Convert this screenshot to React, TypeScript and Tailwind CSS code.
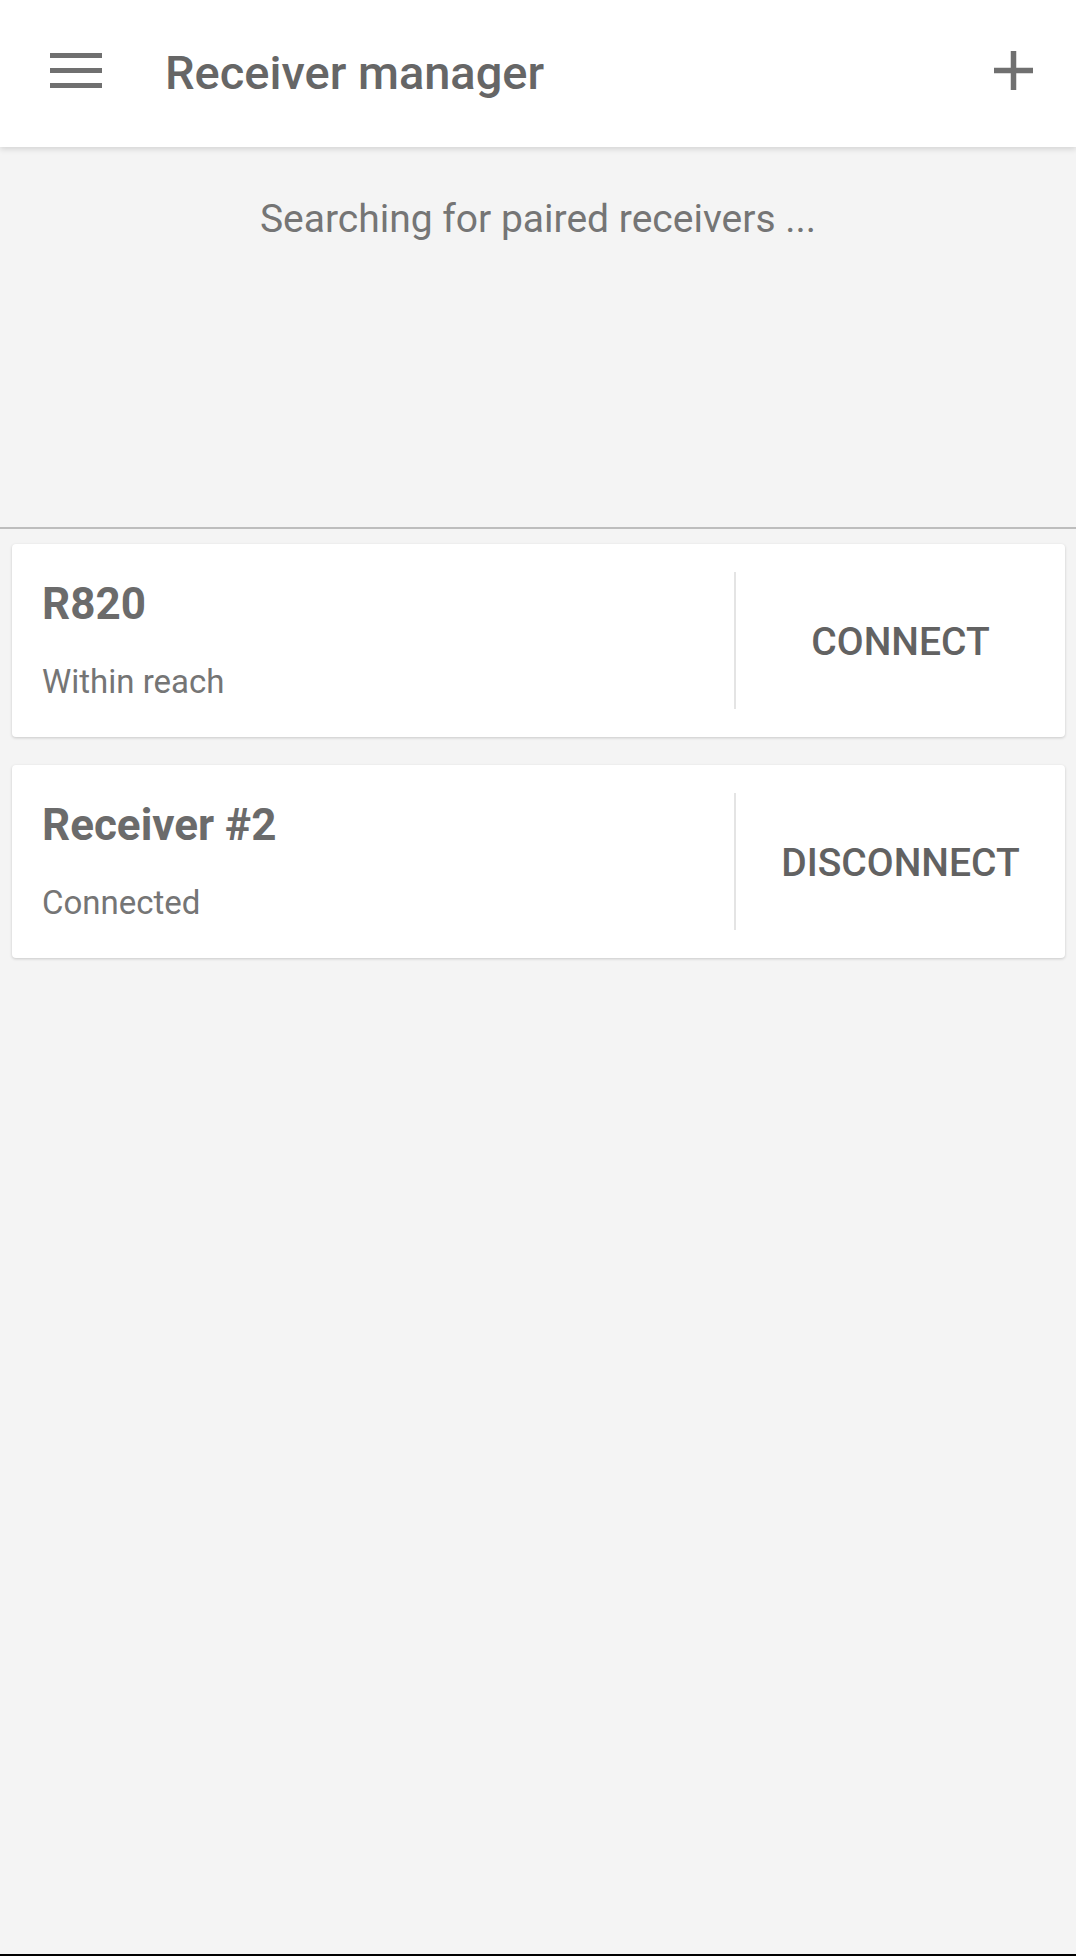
const receivers = [
  { name: "R820", status: "Within reach", action: "CONNECT" },
  { name: "Receiver #2", status: "Connected", action: "DISCONNECT" },
];

const MenuIcon = () => (
  <svg width="52" height="35" viewBox="0 0 52 35" className="fill-[#707070]">
    <rect x="0" y="0" width="52" height="5" />
    <rect x="0" y="15" width="52" height="5" />
    <rect x="0" y="30" width="52" height="5" />
  </svg>
);

const PlusIcon = () => (
  <svg width="39" height="39" viewBox="0 0 39 39" className="fill-[#707070]">
    <rect x="16.75" y="0" width="5.5" height="39" />
    <rect x="0" y="16.75" width="39" height="5.5" />
  </svg>
);

export default function App() {
  return (
    <div className="flex h-[1956px] flex-col bg-[#f4f4f4] font-['Roboto',sans-serif]">
      {/* Toolbar */}
      <header className="relative z-10 flex h-[147px] shrink-0 items-center bg-white pb-[7px] pl-[50px] pr-[43px] shadow-[0_2px_6px_rgba(0,0,0,0.14)]">
        <MenuIcon />
        <h1 className="ml-[63px] mt-[4px] flex-1 text-[47px] leading-[47px] font-medium text-[#666666]">
          Receiver manager
        </h1>
        <PlusIcon />
      </header>

      {/* Search status */}
      <div className="h-[380px] shrink-0 pt-[53px] text-center text-[39px] leading-[39px] text-[#757575]">
        Searching for paired receivers ...
      </div>
      <div className="h-[2px] shrink-0 bg-[#bdbdbd]" />

      {/* Receiver list */}
      <div className="flex flex-1 flex-col gap-[28px] pl-[12px] pr-[11px] pt-[15px]">
        {receivers.map((r) => (
          <div
            key={r.name}
            className="flex rounded-[4px] bg-white shadow-[0_1px_3px_rgba(0,0,0,0.18)]"
          >
            <div className="flex flex-1 flex-col pb-[39px] pl-[30px] pt-[38px]">
              <span className="text-[44px] leading-[44px] font-bold text-[#6b6b6b]">{r.name}</span>
              <span className="mt-[39px] text-[33px] leading-[33px] text-[#757575]">{r.status}</span>
            </div>
            <div className="my-[28px] w-[2px] bg-[#e4e4e4]" />
            <button className="flex w-[329px] items-center justify-center pt-[4px] text-[39px] font-medium text-[#626262]">
              {r.action}
            </button>
          </div>
        ))}
      </div>
      <div className="h-[2px] shrink-0 bg-black" />
    </div>
  );
}
